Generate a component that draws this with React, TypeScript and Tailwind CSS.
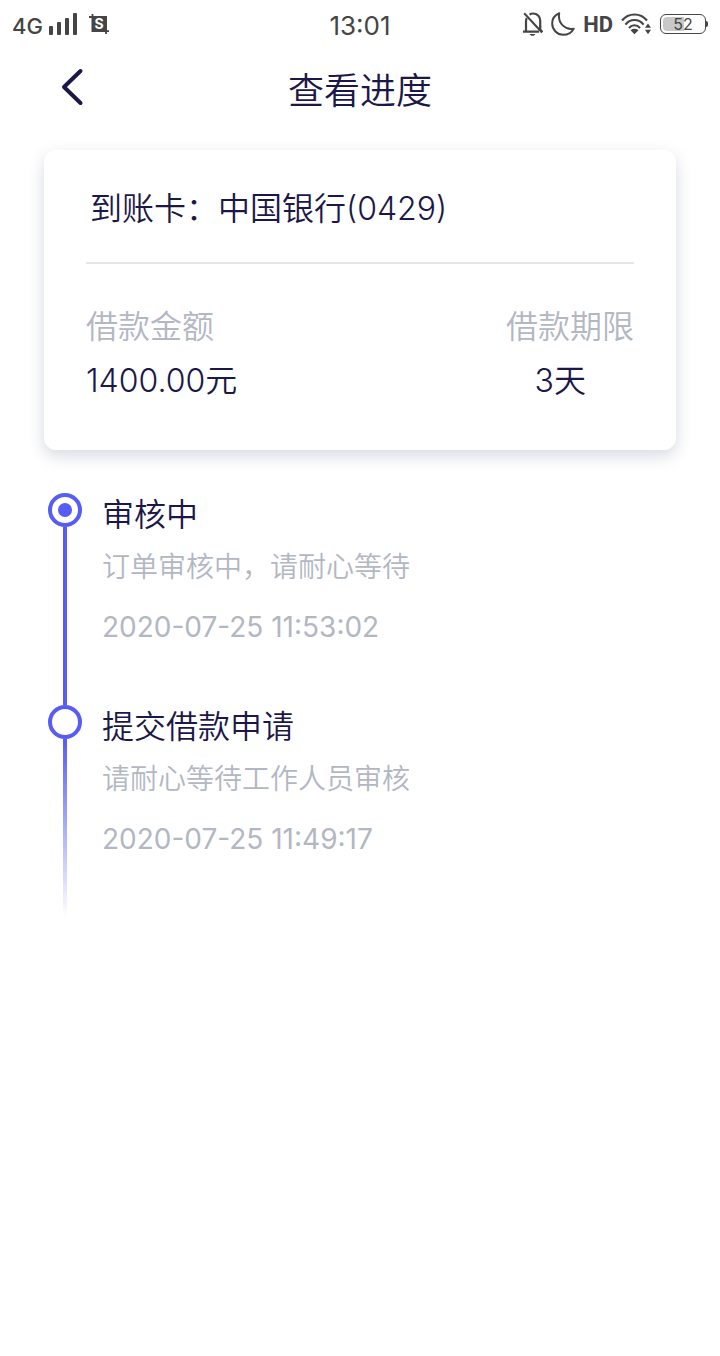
import type { ReactNode } from 'react';

type Step = {
  title: string;
  description: string;
  time: string;
  active: boolean;
};

const STEPS: Step[] = [
  {
    title: '审核中',
    description: '订单审核中，请耐心等待',
    time: '2020-07-25 11:53:02',
    active: true,
  },
  {
    title: '提交借款申请',
    description: '请耐心等待工作人员审核',
    time: '2020-07-25 11:49:17',
    active: false,
  },
];

function SignalIcon() {
  return (
    <svg width="28" height="22" viewBox="0 0 28 22" fill="#454545" aria-hidden="true">
      <rect x="0" y="13" width="4" height="9" rx="1" />
      <rect x="8" y="9" width="4" height="13" rx="1" />
      <rect x="16" y="5" width="4" height="17" rx="1" />
      <rect x="24" y="0" width="4" height="22" rx="1" />
    </svg>
  );
}

// Cropped square with an S in it
function ScreenshotIcon() {
  return (
    <svg width="20" height="22" viewBox="0 0 20 22" aria-hidden="true">
      <rect x="2.5" y="3" width="15.5" height="16" fill="#454545" />
      <path d="M0 4H4M3.5 1V5M16 18.2H20M17 17V21" stroke="#454545" strokeWidth="1.8" />
      <text
        x="10.2"
        y="16"
        textAnchor="middle"
        fill="#ffffff"
        className="font-['Inter',sans-serif] text-[14px] font-bold"
      >
        S
      </text>
    </svg>
  );
}

function MutedBellIcon() {
  return (
    <svg width="20" height="24" viewBox="0 0 20 24" fill="none" stroke="#454545" strokeWidth="2.2" aria-hidden="true">
      <path d="M3 19V9.5C3 8 3.3 6.8 3.8 6M6.5 2.6C7.6 1.8 8.8 1.5 10.2 1.5C14.2 1.5 17.2 4.6 17.2 8.6V15" />
      <path d="M0 19.6H16M17.2 14V17.5L19.5 20" />
      <path d="M1.2 1.2L19 20.5" strokeWidth="2" />
      <path d="M6.5 22H12.5L10.8 23.8H8.2Z" fill="#454545" stroke="none" />
    </svg>
  );
}

function MoonIcon() {
  return (
    <svg width="24" height="24" viewBox="0 0 24 24" fill="none" stroke="#454545" strokeWidth="2" strokeLinejoin="round" aria-hidden="true">
      <path d="M8.2 1.2C3.8 3 1.2 7 1.2 11.6C1.2 17.8 6.1 22.8 12.2 22.8C16.7 22.8 20.6 20.6 22.7 16.7C15.2 18.2 6.4 12.2 8.2 1.2Z" />
    </svg>
  );
}

function WifiIcon() {
  return (
    <svg width="31" height="22" viewBox="0 0 31 22" fill="none" aria-hidden="true">
      <g stroke="#454545" strokeWidth="2.1">
        <path d="M1 7.5C7.5 -0.6 19.5 -0.6 26 7.5" />
        <path d="M4.4 11.6C9.2 5.4 17.8 5.4 22.6 11.6" />
        <path d="M8 15C11 11.4 16 11.4 19 15" />
      </g>
      <path d="M9.5 17.2C12 15.4 15 15.4 17.5 17.2L13.5 21.2Z" fill="#454545" />
      <path d="M27 10.5L30 14.8H24ZM24 16.8H30L27 21.2Z" fill="#454545" />
    </svg>
  );
}

function Battery({ level }: { level: number }) {
  return (
    <div className="flex items-center">
      <div className="relative flex h-5 w-[46px] items-center justify-center rounded-md border border-[#454545] bg-white">
        <div className="absolute inset-0.5">
          <div className="h-full rounded-l-sm bg-[#c8c8c8]" style={{ width: `${level}%` }} />
        </div>
        <span className="relative text-base leading-none">{level}</span>
      </div>
      <div className="h-1.5 w-0.5 rounded-r-sm bg-[#454545]" />
    </div>
  );
}

function StatusBar() {
  return (
    <div className="grid h-12 grid-cols-[1fr_auto_1fr] items-center px-3 font-normal text-[#454545]">
      <div className="flex items-center gap-1.5">
        <span className="pt-1 text-[22px] font-medium">4G</span>
        <SignalIcon />
        <span className="pl-1.5">
          <ScreenshotIcon />
        </span>
      </div>
      <span className="pt-0.5 text-[26px]">13:01</span>
      <div className="flex items-center justify-end gap-2">
        <MutedBellIcon />
        <MoonIcon />
        <span className="font-['Roboto',sans-serif] text-[22px] font-bold">HD</span>
        <WifiIcon />
        <Battery level={52} />
      </div>
    </div>
  );
}

function Header() {
  return (
    <header className="grid h-[84px] grid-cols-[1fr_auto_1fr] items-center px-15">
      <button type="button" aria-label="返回" className="justify-self-start pb-1.5">
        <svg width="24" height="38" viewBox="0 0 24 38" fill="none" aria-hidden="true">
          <path
            d="M20.5 3L4 19L20.5 35"
            stroke="#1b1849"
            strokeWidth="4"
            strokeLinecap="round"
            strokeLinejoin="round"
          />
        </svg>
      </button>
      <h1 className="pt-0.5 text-4xl">查看进度</h1>
    </header>
  );
}

function Field({ label, children }: { label: string; children: ReactNode }) {
  return (
    <div>
      <dt className="text-[#b2b7c3]">{label}</dt>
      <dd className="mt-2">{children}</dd>
    </div>
  );
}

function LoanCard() {
  return (
    <section className="mx-11 mt-[18px] rounded-xl bg-white px-[42px] text-[32px] leading-[46px] shadow-[0_6px_16px_rgba(40,50,100,0.18)]">
      <p className="border-b-2 border-[#e6e6e9] px-1 pt-9 pb-[30px]">到账卡：中国银行(0429)</p>
      <dl className="flex justify-between pt-10 pb-[46px]">
        <Field label="借款金额">1400.00元</Field>
        <Field label="借款期限">
          <span className="block pr-12 text-right">3天</span>
        </Field>
      </dl>
    </section>
  );
}

function TimelineItem({ step, last }: { step: Step; last: boolean }) {
  return (
    <li className="flex gap-5">
      <div className="flex flex-col items-center">
        <div className="flex size-[34px] items-center justify-center rounded-full border-4 border-[#575cf5]">
          {step.active && <div className="size-3.5 rounded-full bg-[#575cf5]" />}
        </div>
        <div
          className={
            last
              ? 'w-1 flex-1 bg-linear-to-b from-[#575cf5] to-transparent'
              : 'w-1 flex-1 bg-[#575cf5]'
          }
        />
      </div>
      <div className="pb-[62px]">
        <h2 className="text-[32px] leading-11">{step.title}</h2>
        <p className="mt-3.5 text-[28px] leading-8 text-[#b2b7c3]">{step.description}</p>
        <time className="mt-7 block text-[28px] leading-8 font-normal text-[#b2b7c3]">{step.time}</time>
      </div>
    </li>
  );
}

export default function App() {
  return (
    <main className="min-h-screen bg-white font-['Inter','Noto_Sans_CJK_SC',sans-serif] font-[350] text-[#1b1849]" lang="zh-CN">
      <StatusBar />
      <Header />
      <LoanCard />
      <ol className="mx-12 mt-[43px]">
        {STEPS.map((step, i) => (
          <TimelineItem key={step.time} step={step} last={i === STEPS.length - 1} />
        ))}
      </ol>
    </main>
  );
}
